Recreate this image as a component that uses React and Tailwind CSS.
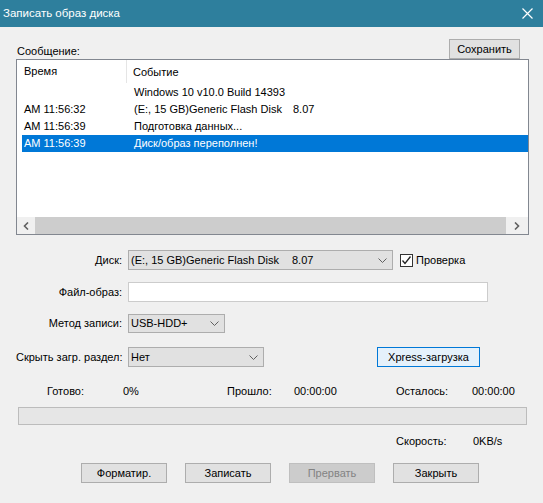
import React from "react";

const font = { fontFamily: '"Liberation Sans", Arial, sans-serif' };

function Chevron() {
  return (
    <svg width="9" height="5" viewBox="0 0 9 5" className="shrink-0">
      <polyline points="0.5,0.5 4.5,4.5 8.5,0.5" fill="none" stroke="#606060" strokeWidth="1" />
    </svg>
  );
}

function Select({ width, height = "h-[20px]", children }) {
  return (
    <div
      className={`${width} ${height} border border-[#adadad] bg-[#e1e1e1] flex items-center justify-between pl-[2px] pr-[5px] text-[11px] text-black`}
    >
      <div className="flex items-center whitespace-nowrap">{children}</div>
      <Chevron />
    </div>
  );
}

function Btn({ children, disabled }) {
  return (
    <div
      className={`w-[86px] h-[20px] flex items-center justify-center text-[11px] border ${
        disabled
          ? "bg-[#cccccc] border-[#bfbfbf] text-[#838383]"
          : "bg-[#e1e1e1] border-[#adadad] text-black"
      }`}
    >
      {children}
    </div>
  );
}

const rows = [
  { time: "", text: "Windows 10 v10.0 Build 14393" },
  { time: "AM 11:56:32", text: "(E:, 15 GB)Generic Flash Disk", extra: "8.07" },
  { time: "AM 11:56:39", text: "Подготовка данных..." },
  { time: "AM 11:56:39", text: "Диск/образ переполнен!", selected: true },
];

export default function App() {
  return (
    <div className="w-[543px] h-[503px] bg-[#f0f0f0] overflow-hidden text-black" style={font}>
      {/* Title bar */}
      <div className="h-[27px] bg-[#2e7f9d] flex items-center justify-between pl-[3px] pr-[10px] text-white">
        <span className="text-[11.5px]">Записать образ диска</span>
        <svg width="11" height="11" viewBox="0 0 11 11">
          <path d="M0.5 0.5 L10.5 10.5 M10.5 0.5 L0.5 10.5" stroke="#ffffff" strokeWidth="1.2" />
        </svg>
      </div>

      <div className="pl-[16px] pr-[14px]">
        {/* Message header */}
        <div className="mt-[12px] h-[20px] flex items-end justify-between">
          <span className="text-[11px] leading-[14px] pb-[1px] pl-[1px]">Сообщение:</span>
          <div className="mr-[9px] w-[71px] h-[20px] border border-[#adadad] bg-[#e1e1e1] flex items-center justify-center text-[11px]">
            Сохранить
          </div>
        </div>

        {/* Log list */}
        <div className="h-[176px] border border-[#828790] bg-white flex flex-col text-[11px]">
          <div className="h-[24px] flex shrink-0">
            <div className="w-[110px] pl-[7px] flex items-center border-r border-[#e5e5e5] mb-[1px]">Время</div>
            <div className="pl-[6px] flex items-center">Событие</div>
          </div>
          {rows.map((r, i) => (
            <div
              key={i}
              className={`h-[17px] ml-[5px] flex items-center whitespace-nowrap ${
                r.selected ? "bg-[#0078d7] text-white" : ""
              }`}
            >
              <div className="w-[105px] shrink-0 pl-[2px]">{r.time}</div>
              <div className="pl-[7px] flex">
                <span className="inline-block w-[159px] shrink-0">{r.text}</span>
                {r.extra && <span>{r.extra}</span>}
              </div>
            </div>
          ))}
          <div className="flex-1" />
          <div className="h-[17px] flex shrink-0">
            <div className="w-[18px] bg-[#f0f0f0] flex items-center justify-center">
              <svg width="6" height="8" viewBox="0 0 6 8">
                <path d="M5 0.5 L1.5 4 L5 7.5" fill="none" stroke="#606060" strokeWidth="1.6" />
              </svg>
            </div>
            <div className="flex-1 bg-[#cdcdcd]" />
            <div className="w-[22px] bg-[#f0f0f0] flex items-center justify-center">
              <svg width="6" height="8" viewBox="0 0 6 8">
                <path d="M1 0.5 L4.5 4 L1 7.5" fill="none" stroke="#606060" strokeWidth="1.6" />
              </svg>
            </div>
          </div>
        </div>

        {/* Disk */}
        <div className="mt-[15px] flex items-center text-[11px]">
          <span className="w-[106px] text-right">Диск:</span>
          <div className="ml-[6px]">
            <Select width="w-[265px]">
              <span className="inline-block w-[161px] shrink-0">(E:, 15 GB)Generic Flash Disk</span>
              <span>8.07</span>
            </Select>
          </div>
          <div className="ml-[7px] w-[13px] h-[13px] border border-[#333333] bg-white flex items-center justify-center">
            <svg width="11" height="11" viewBox="0 0 11 11">
              <path d="M1.5 5.5 L4 8.5 L9.5 1.5" fill="none" stroke="#222222" strokeWidth="1.3" />
            </svg>
          </div>
          <span className="ml-[3px]">Проверка</span>
        </div>

        {/* Image file */}
        <div className="mt-[12px] flex items-center text-[11px]">
          <span className="w-[106px] text-right">Файл-образ:</span>
          <div className="ml-[6px] w-[360px] h-[20px] border border-[#cccccc] bg-white" />
        </div>

        {/* Write method */}
        <div className="mt-[12px] flex items-center text-[11px]">
          <span className="w-[106px] text-right">Метод записи:</span>
          <div className="ml-[6px]">
            <Select width="w-[97px]" height="h-[19px]">USB-HDD+</Select>
          </div>
        </div>

        {/* Hide boot partition */}
        <div className="mt-[14px] flex items-center text-[11px]">
          <span className="w-[106px] text-right whitespace-nowrap">Скрыть загр. раздел:</span>
          <div className="ml-[6px]">
            <Select width="w-[136px]">Нет</Select>
          </div>
          <div className="ml-[113px] w-[103px] h-[20px] border border-[#0078d7] bg-[#e5f1fb] flex items-center justify-center">
            Xpress-загрузка
          </div>
        </div>

        {/* Status */}
        <div className="mt-[16px] h-[16px] pl-[31px] flex items-center text-[11px] whitespace-nowrap">
          <span className="w-[76px]">Готово:</span>
          <span className="w-[104px]">0%</span>
          <span className="w-[67px]">Прошло:</span>
          <span className="w-[102px]">00:00:00</span>
          <span className="w-[76px]">Осталось:</span>
          <span>00:00:00</span>
        </div>

        <div className="mt-[8px] ml-[2px] w-[509px] h-[18px] border border-[#bcbcbc] bg-[#e6e6e6]" />

        <div className="mt-[8px] h-[16px] pl-[380px] flex items-center text-[11px] whitespace-nowrap">
          <span className="w-[77px]">Скорость:</span>
          <span>0KB/s</span>
        </div>

        {/* Buttons */}
        <div className="mt-[14px] pl-[65px] flex gap-[18px]">
          <Btn>Форматир.</Btn>
          <Btn>Записать</Btn>
          <Btn disabled>Прервать</Btn>
          <Btn>Закрыть</Btn>
        </div>
      </div>
    </div>
  );
}
